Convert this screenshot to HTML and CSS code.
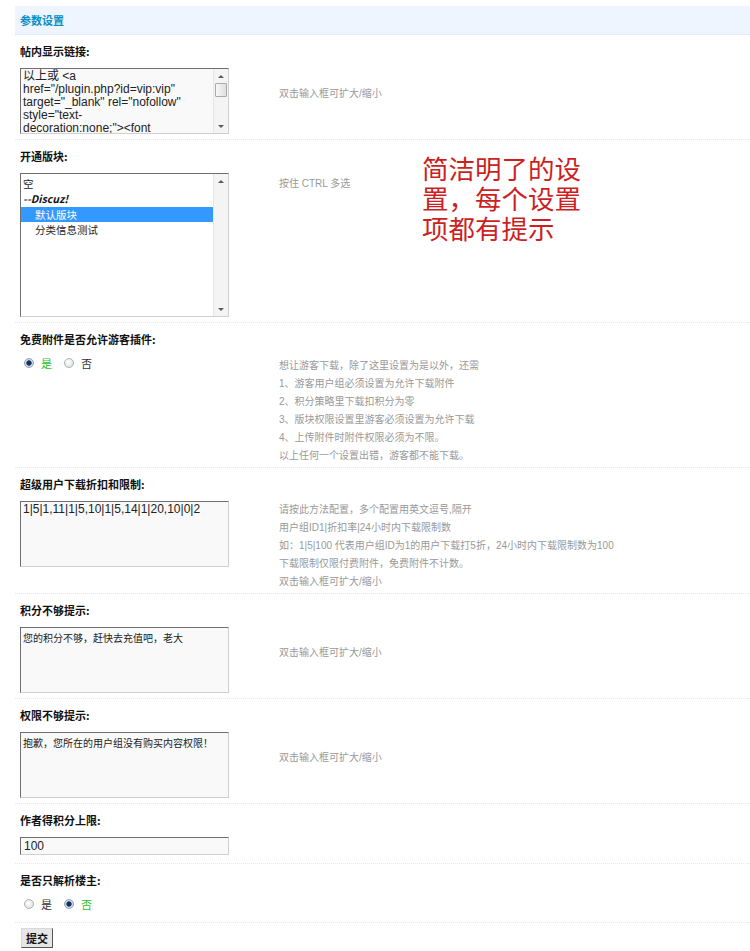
FILE: index.html
```html
<!DOCTYPE html>
<html lang="zh-CN">
<head>
<meta charset="utf-8">
<title>参数设置</title>
<link rel="stylesheet" href="styles.css">
</head>
<body>
<div class="page">
  <form class="settings">
    <h3 class="partition">参数设置</h3>

    <div class="setting">
      <div class="title">帖内显示链接:</div>
      <div class="body">
        <div class="field">
          <div class="scrollbox txtbox">
            <textarea class="inner-text" rows="5">以上或 <a href="/plugin.php?&#8288;id=vip:vip" target="_blank" rel="nofollow" style="text-decoration:none;">&#8288;<font color="#FF0000"><b>开通VIP会员</b></font></a> 即可免费下载本站所有附件，VIP会员享受更多特权，详情请查看 <a href="/plugin.php?&#8288;id=vip:vip" target="_blank" rel="nofollow">VIP会员介绍</a>，开通后立即生效。</textarea>
            <div class="vscroll" aria-hidden="true">
              <span class="arrow up"></span>
              <span class="thumb"></span>
              <span class="track"></span>
              <span class="arrow down"></span>
            </div>
          </div>
        </div>
        <div class="tips near">双击输入框可扩大/缩小</div>
      </div>
    </div>

    <div class="setting">
      <div class="title">开通版块:</div>
      <div class="body">
        <div class="field">
          <div class="scrollbox listwrap">
            <select class="listbox" multiple size="10">
              <option>空</option>
              <optgroup label="--Discuz!">
                <option selected>默认版块</option>
                <option>分类信息测试</option>
              </optgroup>
            </select>
            <div class="vscroll" aria-hidden="true">
              <span class="arrow up"></span>
              <span class="track"></span>
              <span class="arrow down"></span>
            </div>
          </div>
        </div>
        <div class="tips nudge">按住 CTRL 多选</div>
      </div>
    </div>

    <div class="setting">
      <div class="title">免费附件是否允许游客插件:</div>
      <div class="body">
        <div class="field">
          <ul class="radios">
            <li class="checked"><label><input type="radio" name="guest" checked>是</label></li>
            <li><label><input type="radio" name="guest">否</label></li>
          </ul>
        </div>
        <div class="tips tight">想让游客下载，除了这里设置为是以外，还需<br>1、游客用户组必须设置为允许下载附件<br>2、积分策略里下载扣积分为零<br>3、版块权限设置里游客必须设置为允许下载<br>4、上传附件时附件权限必须为不限。<br>以上任何一个设置出错，游客都不能下载。</div>
      </div>
    </div>

    <div class="setting">
      <div class="title">超级用户下载折扣和限制:</div>
      <div class="body">
        <div class="field">
          <textarea class="txtarea" rows="5">1|5|1,11|1|5,10|1|5,14|1|20,10|0|2</textarea>
        </div>
        <div class="tips">请按此方法配置，多个配置用英文逗号,隔开<br>用户组ID1|折扣率|24小时内下载限制数<br>如：1|5|100 代表用户组ID为1的用户下载打5折，24小时内下载限制数为100<br>下载限制仅限付费附件，免费附件不计数。<br>双击输入框可扩大/缩小</div>
      </div>
    </div>

    <div class="setting">
      <div class="title">积分不够提示:</div>
      <div class="body">
        <div class="field">
          <textarea class="txtarea cjk" rows="5">您的积分不够，赶快去充值吧，老大</textarea>
        </div>
        <div class="tips near">双击输入框可扩大/缩小</div>
      </div>
    </div>

    <div class="setting">
      <div class="title">权限不够提示:</div>
      <div class="body">
        <div class="field">
          <textarea class="txtarea cjk" rows="5">抱歉，您所在的用户组没有购买内容权限！</textarea>
        </div>
        <div class="tips near">双击输入框可扩大/缩小</div>
      </div>
    </div>

    <div class="setting">
      <div class="title">作者得积分上限:</div>
      <div class="body">
        <div class="field">
          <input class="txt" type="text" value="100">
        </div>
      </div>
    </div>

    <div class="setting">
      <div class="title">是否只解析楼主:</div>
      <div class="body">
        <div class="field">
          <ul class="radios">
            <li><label><input type="radio" name="owner">是</label></li>
            <li class="checked"><label><input type="radio" name="owner" checked>否</label></li>
          </ul>
        </div>
      </div>
    </div>

    <div class="submit-row">
      <button class="btn" type="button">提交</button>
    </div>
  </form>
</div>
<div class="annotation">简洁明了的设<br>置，每个设置<br>项都有提示</div>
</body>
</html>
```
FILE: styles.css
```css
body {
  margin: 0;
  font: 12px "Liberation Sans", "Noto Sans CJK SC", sans-serif;
  color: #000;
  background: #fff;
}

.page {
  margin: 6px 0 0 15px;
}

.partition {
  margin: 0;
  height: 28px;
  line-height: 28px;
  padding-left: 5px;
  background: #eef5fe;
  color: #0b8fc4;
  font-size: 11px;
  font-weight: bold;
  font-family: "Noto Sans CJK SC", sans-serif;
  border-bottom: 1px dotted #dde7ef;
}

.setting {
  border-bottom: 1px dotted #e2e8ec;
}

.title {
  padding: 7px 0 5px 5px;
  line-height: 18px;
  font-size: 11px;
  font-weight: bold;
  font-family: "Noto Sans CJK SC", sans-serif;
  color: #111;
}

.body {
  display: grid;
  grid-template-columns: 259px 1fr;
  align-items: start;
  padding: 3px 0 2px;
}

.field {
  padding-left: 5px;
}

.tips {
  padding-left: 5px;
  font-size: 10px;
  line-height: 18px;
  color: #999;
  font-family: "Liberation Sans", "Noto Sans CJK SC", sans-serif;
}

.tips.near { margin-top: 17px; }
.tips.nudge { margin-top: 2px; }
.tips.tight { margin-top: 1px; }

/* shared control frame */
.txtarea,
.txt,
.scrollbox {
  display: block;
  box-sizing: border-box;
  width: 209px;
  margin: 0 0 3px;
  border: 1px solid;
  border-color: #6f6f6f #cfcfcf #cfcfcf #6f6f6f;
  color: #222;
  outline: none;
}

.txtarea {
  height: 66px;
  padding: 1px 2px;
  background: #f9f9f9;
  font: 12px/13px "Liberation Sans", "Noto Sans CJK SC", sans-serif;
  resize: none;
  overflow: hidden;
}

.txtarea.cjk {
  font-size: 10px;
  padding-top: 4px;
}

.txt {
  height: 18px;
  margin-bottom: 6px;
  padding: 0 3px;
  background: #f9f9f9;
  font: 12px "Liberation Sans", sans-serif;
}

/* boxes with a classic vertical scrollbar */
.scrollbox {
  display: flex;
}

.txtbox {
  height: 66px;
  background: #f9f9f9;
}

.listwrap {
  height: 144px;
  background: #fff;
}

.inner-text {
  flex: 1;
  min-width: 0;
  margin: 0;
  border: 0;
  padding: 1px 8px 1px 2px;
  background: transparent;
  font: 12px/13px "Liberation Sans", "Noto Sans CJK SC", sans-serif;
  color: #222;
  resize: none;
  overflow: hidden;
  outline: none;
}

.listbox {
  flex: 1;
  min-width: 0;
  margin: 0;
  border: 0;
  padding: 2px 0 0;
  background: transparent;
  font: 10.5px "Noto Sans CJK SC", sans-serif;
  overflow: hidden;
  outline: none;
}

.listbox option {
  padding: 0 2px;
  min-height: 0;
  line-height: 13px;
  font-style: normal;
  font-weight: normal;
  color: #222;
}

.listbox optgroup {
  font-style: italic;
  font-weight: bold;
  line-height: 13px;
  color: #111;
}

.listbox optgroup option {
  padding-left: 14px;
}

.listbox option:checked {
  background: #3399ff linear-gradient(#3399ff, #3399ff);
  color: #fff;
}

.vscroll {
  width: 14px;
  flex: none;
  display: flex;
  flex-direction: column;
  background: #f4f4f4;
  border-left: 1px solid #e6e6e6;
}

.vscroll .arrow {
  height: 14px;
  flex: none;
  display: flex;
  align-items: center;
  justify-content: center;
}

.vscroll .arrow::before {
  content: "";
  width: 0;
  height: 0;
  border-left: 3px solid transparent;
  border-right: 3px solid transparent;
}

.vscroll .arrow.up::before {
  border-bottom: 3px solid #5a5a5a;
}

.vscroll .arrow.down::before {
  border-top: 3px solid #5a5a5a;
}

.vscroll .thumb {
  height: 12px;
  flex: none;
  margin: 0 1px;
  border: 1px solid #a9a9a9;
  border-radius: 1px;
  background: linear-gradient(to right, #f7f7f7, #dedede);
}

.vscroll .track {
  flex: 1;
}

/* radios */
.radios {
  list-style: none;
  display: flex;
  align-items: center;
  height: 14px;
  margin: 0 0 9px;
  padding: 0 0 0 4px;
}

.radios li {
  margin-right: 12px;
}

.radios label {
  display: flex;
  align-items: center;
  gap: 7px;
  font: 11px "Noto Sans CJK SC", sans-serif;
  color: #333;
}

.radios li.checked label {
  color: #2cbf2c;
}

.radios input {
  appearance: none;
  -webkit-appearance: none;
  width: 10px;
  height: 10px;
  margin: 0;
  border: 1px solid #aab1ba;
  border-radius: 50%;
  background: radial-gradient(circle at 40% 40%, #fff, #d9d9d9);
}

.radios input:checked {
  border-color: #8ea3bd;
  background: radial-gradient(circle, #1a3357 0 2.3px, #c8daee 3px);
}

/* submit */
.submit-row {
  padding: 5px 0 0 6px;
}

.btn {
  width: 32px;
  height: 20px;
  padding: 0;
  background: #e6e6e6;
  border: 1px solid;
  border-color: #d8d8d8 #555 #555 #d8d8d8;
  font: bold 11px "Noto Sans CJK SC", sans-serif;
  color: #111;
}

/* red annotation drawn over the screenshot */
.annotation {
  position: absolute;
  left: 422px;
  top: 153px;
  font: 26.5px/30px "Noto Sans CJK SC", sans-serif;
  color: #cc1f1f;
}
```
